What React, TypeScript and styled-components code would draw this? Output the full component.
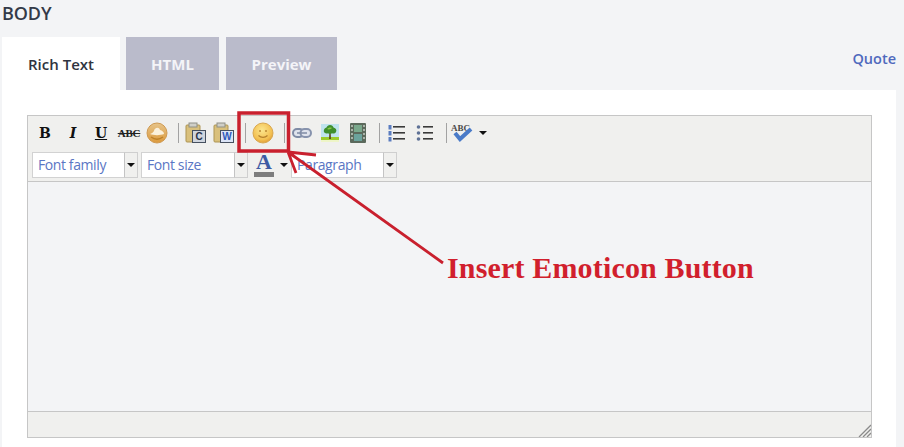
import React from 'react';
import styled, { createGlobalStyle } from 'styled-components';

const GlobalStyle = createGlobalStyle`
  html, body {
    margin: 0;
    padding: 0;
    background: #f3f4f6;
    font-family: "Open Sans", "Liberation Sans", sans-serif;
    overflow: hidden;
  }
`;

const Page = styled.div`
  position: relative;
  width: 904px;
  height: 447px;
  padding: 0 8px 0 2px;
  box-sizing: border-box;
  overflow: hidden;
`;

const Heading = styled.div`
  height: 37px;
  box-sizing: border-box;
  font-size: 18px;
  line-height: 26px;
  font-weight: 600;
  letter-spacing: -0.1px;
  color: #333a48;
`;

const TabBar = styled.div`
  display: flex;
  align-items: flex-start;
  height: 53px;
`;

const Tab = styled.div<{ $active?: boolean; $width: number }>`
  width: ${(p) => p.$width}px;
  height: 53px;
  padding-top: 1px;
  box-sizing: border-box;
  margin-right: ${(p) => (p.$active ? 6 : 7)}px;
  display: flex;
  align-items: center;
  justify-content: center;
  font-size: 15px;
  font-weight: ${(p) => (p.$active ? 600 : 700)};
  background: ${(p) => (p.$active ? '#ffffff' : '#babbcb')};
  color: ${(p) => (p.$active ? '#2f3440' : '#f4f4f8')};
`;

const QuoteLink = styled.a`
  margin-left: auto;
  margin-top: 12px;
  font-size: 14.5px;
  line-height: 20px;
  font-weight: 600;
  color: #4f69bd;
`;

const Panel = styled.div`
  background: #ffffff;
  height: 357px;
  padding: 25px 24px 0 25px;
  box-sizing: border-box;
`;

const Editor = styled.div`
  height: 323px;
  border: 1px solid #c6c6c6;
  box-sizing: border-box;
  display: flex;
  flex-direction: column;
`;

const Toolbar = styled.div`
  height: 66px;
  background: #f0f0ee;
  border-bottom: 1px solid #c6c6c6;
  box-sizing: border-box;
  padding: 4px 0 0 3px;
  display: flex;
  flex-direction: column;
  gap: 6px;
`;

const ToolRow = styled.div`
  display: flex;
  align-items: center;
  height: 26px;
`;

const ToolButton = styled.span<{ $width?: number }>`
  width: ${(p) => p.$width ?? 28}px;
  height: 26px;
  display: flex;
  align-items: center;
  justify-content: center;
  flex: none;
`;

const Separator = styled.span`
  width: 1px;
  height: 20px;
  margin: 0 3px 0 7px;
  background: #a2a2a2;
  flex: none;
`;

const Letter = styled.span<{ $italic?: boolean; $underline?: boolean }>`
  font-family: "DejaVu Serif", serif;
  font-weight: 700;
  font-size: 14px;
  line-height: 16px;
  color: #111111;
  font-style: ${(p) => (p.$italic ? 'italic' : 'normal')};
  text-decoration: ${(p) => (p.$underline ? 'underline' : 'none')};
`;

const Strike = styled.span`
  font-family: "Liberation Serif", serif;
  font-weight: 700;
  font-size: 11px;
  letter-spacing: -0.2px;
  color: #222222;
  text-decoration: line-through;
`;

const Caret = styled.span<{ $left?: number }>`
  width: 0;
  height: 0;
  margin-left: ${(p) => p.$left ?? 0}px;
  border-left: 4px solid transparent;
  border-right: 4px solid transparent;
  border-top: 4px solid #111111;
  flex: none;
`;

const SelectBox = styled.div<{ $left?: number; $width?: number }>`
  width: ${(p) => p.$width ?? 106}px;
  height: 26px;
  margin-left: ${(p) => p.$left ?? 0}px;
  display: flex;
  flex: none;
  box-sizing: border-box;
`;

const SelectLabel = styled.div`
  flex: 1;
  background: #ffffff;
  border: 1px solid #d2d2d2;
  border-right: 1px solid #c4c4c4;
  padding-left: 5px;
  font-size: 14px;
  line-height: 24px;
  letter-spacing: -0.4px;
  color: #5a76c4;
  white-space: nowrap;
`;

const SelectArrow = styled.div`
  width: 13px;
  background: #f0f0ee;
  border: 1px solid #cfcfcf;
  border-left: none;
  box-sizing: border-box;
  display: flex;
  align-items: center;
  justify-content: center;
`;

const ColorButton = styled.div`
  width: 20px;
  height: 26px;
  margin-left: 6px;
  display: flex;
  flex-direction: column;
  align-items: center;
  flex: none;
`;

const ColorLetter = styled.span`
  font-family: "Liberation Serif", serif;
  font-weight: 700;
  font-size: 22px;
  line-height: 20px;
  color: #3d5aa3;
`;

const ColorBar = styled.span`
  width: 20px;
  height: 5px;
  background: #7d7d7d;
`;

const Content = styled.div`
  flex: 1;
  background: #f3f4f6;
`;

const StatusBar = styled.div`
  height: 26px;
  background: #f0f0ee;
  border-top: 1px solid #c6c6c6;
  box-sizing: border-box;
  display: flex;
  justify-content: flex-end;
  align-items: flex-end;
`;

const Overlay = styled.svg`
  position: absolute;
  left: 0;
  top: 0;
  pointer-events: none;
`;

const Callout = styled.div`
  position: absolute;
  left: 447px;
  top: 250px;
  font-family: "Liberation Serif", serif;
  font-weight: 700;
  font-size: 30px;
  line-height: 36px;
  letter-spacing: 0.16px;
  white-space: nowrap;
  color: #d11f2d;
`;

const OrangeIcon = () => (
  <svg width="22" height="22" viewBox="0 0 22 22">
    <defs>
      <linearGradient id="org" x1="0" y1="0" x2="0" y2="1">
        <stop offset="0" stopColor="#e6c48a" />
        <stop offset="1" stopColor="#dc9a3c" />
      </linearGradient>
    </defs>
    <circle cx="11" cy="11" r="10" fill="url(#org)" stroke="#cf9a52" />
    <path d="M4 12c1.500-.5 3-1.500 4-3 0-3 5-5 6-1 2 .5 4 2 4 4-4 1.500-10 1.500-14 0z" fill="#fbf1dc" />
    <path d="M5 15c4 3 8 3 12 0" stroke="#bd8128" strokeWidth="1.500" fill="none" />
  </svg>
);

const ClipboardIcon = ({ letter, paper, ink }: { letter: string; paper: string; ink: string }) => (
  <svg width="22" height="22" viewBox="0 0 22 22">
    <rect x="1" y="3" width="14" height="17" rx="1" fill="#d9c07c" stroke="#ad9452" />
    <rect x="4" y="1" width="8" height="4" fill="#cfcfc8" stroke="#8f8f85" />
    <rect x="7.500" y="8.500" width="13" height="12" fill={paper} stroke="#46505f" />
    <text x="14" y="18" textAnchor="middle" fontFamily="Liberation Sans, sans-serif" fontWeight="700" fontSize="10" fill={ink}>
      {letter}
    </text>
  </svg>
);

const SmileIcon = () => (
  <svg width="22" height="22" viewBox="0 0 22 22">
    <defs>
      <radialGradient id="sm" cx="0.45" cy="0.35" r="0.7">
        <stop offset="0" stopColor="#fbe68e" />
        <stop offset="0.7" stopColor="#f3c052" />
        <stop offset="1" stopColor="#db9433" />
      </radialGradient>
    </defs>
    <circle cx="11" cy="11" r="10" fill="url(#sm)" stroke="#d9a850" />
    <circle cx="8" cy="9" r="1" fill="#bd8a34" />
    <circle cx="14" cy="9" r="1" fill="#bd8a34" />
    <path d="M6.500 13.500c2.500 2.600 6.500 2.600 9 0" stroke="#b5802c" strokeWidth="1.200" fill="none" />
  </svg>
);

const LinkIcon = () => (
  <svg width="20" height="12" viewBox="0 0 20 12">
    <rect x="1" y="2" width="10.500" height="8" rx="4" fill="#dfe3ec" stroke="#7f8ba5" strokeWidth="2" />
    <rect x="8.500" y="2" width="10.500" height="8" rx="4" fill="#dfe3ec" stroke="#8793ad" strokeWidth="2" />
    <path d="M5 6h10" stroke="#7f8ba5" strokeWidth="1.500" />
  </svg>
);

const TreeIcon = () => (
  <svg width="18" height="18" viewBox="0 0 18 18">
    <rect width="18" height="13" fill="#bfe3ee" />
    <rect y="13" width="18" height="5" fill="#9ccc2e" />
    <rect y="16" width="18" height="2" fill="#eef5c8" />
    <path d="M8 15h2l-.3-6H8.300z" fill="#5f4a22" />
    <path d="M9 1c2 0 3 1 3.500 2.500C15 4 16 6 15 8c-.8 1.500-3 2-4 1.200-1 1-3 1-4 0C5 10 3 9 2.800 7.300 2.600 5.500 4 4 5.500 3.600 6 2 7.500 1 9 1z" fill="#3f8f2c" />
    <path d="M6 5c1-1 3-2 5-1-1 1-3 2-5 1z" fill="#8bc84a" />
  </svg>
);

const FilmIcon = () => (
  <svg width="16" height="20" viewBox="0 0 16 20">
    <rect width="16" height="20" rx="1" fill="#5c6a5c" />
    <rect x="4" y="2" width="8" height="7" fill="#7aa98c" />
    <rect x="4" y="11" width="8" height="7" fill="#6ba39c" />
    {[2, 6, 10, 14].map((y) => (
      <React.Fragment key={y}>
        <rect x="1" y={y} width="2" height="2" fill="#a9b3a9" />
        <rect x="13" y={y} width="2" height="2" fill="#a9b3a9" />
      </React.Fragment>
    ))}
  </svg>
);

const ListIcon = ({ ordered }: { ordered?: boolean }) => (
  <svg width="20" height="18" viewBox="0 0 20 18">
    {[2, 8, 14].map((y) => (
      <React.Fragment key={y}>
        {ordered ? (
          <rect x="1.500" y={y - 1} width="3" height="4.500" fill="#5a7cc0" />
        ) : (
          <circle cx="3.500" cy={y + 1} r="1.800" fill="#5f7296" />
        )}
        <rect x={ordered ? 6 : 8} y={y} width={ordered ? 12 : 10} height="1.600" fill="#3a3a3a" />
      </React.Fragment>
    ))}
  </svg>
);

const SpellIcon = () => (
  <svg width="24" height="20" viewBox="0 0 24 20">
    <text x="1" y="8" fontFamily="Liberation Serif, serif" fontWeight="700" fontSize="9" fill="#4a4a4a">
      ABC
    </text>
    <path d="M5 10l5 6L21 6" stroke="#4a7bc8" strokeWidth="4" fill="none" />
  </svg>
);

const Resizer = () => (
  <svg width="13" height="13" viewBox="0 0 13 13">
    <path d="M1 13L13 1M5 13l8-8M9 13l4-4" stroke="#8a8a8a" strokeWidth="1.300" />
  </svg>
);

function Select({ label, left, width }: { label: string; left?: number; width?: number }) {
  return (
    <SelectBox $left={left} $width={width}>
      <SelectLabel>{label}</SelectLabel>
      <SelectArrow>
        <Caret />
      </SelectArrow>
    </SelectBox>
  );
}

export default function App() {
  return (
    <Page>
      <GlobalStyle />
      <Heading>BODY</Heading>
      <TabBar>
        <Tab $active $width={118}>Rich Text</Tab>
        <Tab $width={93}>HTML</Tab>
        <Tab $width={111}>Preview</Tab>
        <QuoteLink>Quote</QuoteLink>
      </TabBar>
      <Panel>
        <Editor>
          <Toolbar>
            <ToolRow>
              <ToolButton><Letter>B</Letter></ToolButton>
              <ToolButton><Letter $italic>I</Letter></ToolButton>
              <ToolButton><Letter $underline>U</Letter></ToolButton>
              <ToolButton><Strike>ABC</Strike></ToolButton>
              <ToolButton><OrangeIcon /></ToolButton>
              <Separator />
              <ToolButton><ClipboardIcon letter="C" paper="#cfd5de" ink="#27324a" /></ToolButton>
              <ToolButton><ClipboardIcon letter="W" paper="#dbe4f6" ink="#2c57b8" /></ToolButton>
              <Separator />
              <ToolButton><SmileIcon /></ToolButton>
              <Separator />
              <ToolButton><LinkIcon /></ToolButton>
              <ToolButton><TreeIcon /></ToolButton>
              <ToolButton><FilmIcon /></ToolButton>
              <Separator />
              <ToolButton><ListIcon ordered /></ToolButton>
              <ToolButton><ListIcon /></ToolButton>
              <Separator />
              <ToolButton $width={24}><SpellIcon /></ToolButton>
              <Caret $left={5} />
            </ToolRow>
            <ToolRow>
              <Select label="Font family" left={1} />
              <Select label="Font size" left={3} width={107} />
              <ColorButton>
                <ColorLetter>A</ColorLetter>
                <ColorBar />
              </ColorButton>
              <Caret $left={6} />
              <Select label="Paragraph" left={3} />
            </ToolRow>
          </Toolbar>
          <Content />
          <StatusBar>
            <Resizer />
          </StatusBar>
        </Editor>
      </Panel>
      <Overlay width="904" height="447" viewBox="0 0 904 447">
        <rect x="239" y="113" width="49.500" height="38" fill="none" stroke="#c9202e" strokeWidth="3.500" />
        <path d="M288 152L443 263M288 152L316 155M288 152L296 173" stroke="#c9202e" strokeWidth="2.800" fill="none" />
      </Overlay>
      <Callout>Insert Emoticon Button</Callout>
    </Page>
  );
}
